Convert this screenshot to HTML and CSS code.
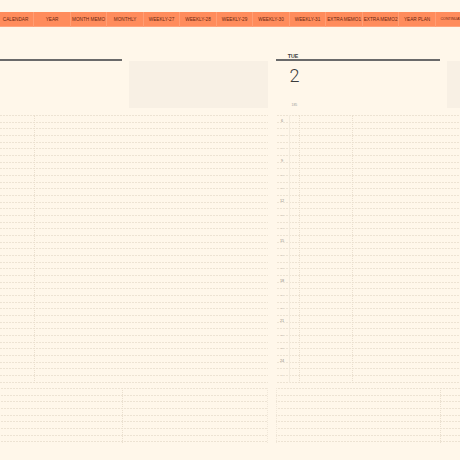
FILE: index.html
```html
<!DOCTYPE html>
<html lang="en">
<head>
    <meta charset="UTF-8">
    <meta name="viewport" content="width=device-width, initial-scale=1.0">
    <title>Weekly-27</title>
    <link rel="stylesheet" href="styles.css">
</head>
<body>
    <nav class="tabs">
        <a class="tab">CALENDAR</a>
        <a class="tab">YEAR</a>
        <a class="tab">MONTH MEMO</a>
        <a class="tab">MONTHLY</a>
        <a class="tab">WEEKLY-27</a>
        <a class="tab">WEEKLY-28</a>
        <a class="tab">WEEKLY-29</a>
        <a class="tab">WEEKLY-30</a>
        <a class="tab">WEEKLY-31</a>
        <a class="tab">EXTRA MEMO1</a>
        <a class="tab">EXTRA MEMO2</a>
        <a class="tab">YEAR PLAN</a>
        <a class="tab tab-small">CONTINUATION</a>
    </nav>

    <main class="week">
        <section class="day">
            <div class="day-head">
                <div class="dow">MON</div>
                <div class="date">
                    <span class="num">1</span>
                    <span class="yday">184</span>
                </div>
            </div>
            <div class="memo-head"></div>
            <div class="hours">
                <div class="times">
                    <span class="major">6</span><span>7</span><span>8</span>
                    <span class="major">9</span><span>10</span><span>11</span>
                    <span class="major">12</span><span>13</span><span>14</span>
                    <span class="major">15</span><span>16</span><span>17</span>
                    <span class="major">18</span><span>19</span><span>20</span>
                    <span class="major">21</span><span>22</span><span>23</span>
                    <span class="major">24</span><span>1</span>
                </div>
                <div class="col col-a"></div>
                <div class="col col-b"></div>
                <div class="col"></div>
            </div>
            <div class="notes">
                <div class="notes-day"></div>
                <div class="notes-memo"></div>
            </div>
        </section>

        <section class="day">
            <div class="day-head">
                <div class="dow">TUE</div>
                <div class="date">
                    <span class="num">2</span>
                    <span class="yday">185</span>
                </div>
            </div>
            <div class="memo-head"></div>
            <div class="hours">
                <div class="times">
                    <span class="major">6</span><span>7</span><span>8</span>
                    <span class="major">9</span><span>10</span><span>11</span>
                    <span class="major">12</span><span>13</span><span>14</span>
                    <span class="major">15</span><span>16</span><span>17</span>
                    <span class="major">18</span><span>19</span><span>20</span>
                    <span class="major">21</span><span>22</span><span>23</span>
                    <span class="major">24</span><span>1</span>
                </div>
                <div class="col col-a"></div>
                <div class="col col-b"></div>
                <div class="col"></div>
            </div>
            <div class="notes">
                <div class="notes-day"></div>
                <div class="notes-memo"></div>
            </div>
        </section>
    </main>
</body>
</html>
```

FILE: styles.css
```css
body {
    margin: 0;
    width: 460px;
    height: 460px;
    overflow: hidden;
    font-family: "Liberation Sans", Arial, sans-serif;
    background-color: #FFF7EA;
}

/* top tab bar */
.tabs {
    display: flex;
    height: 15px;
    margin-top: 12px;
    background-color: #FF8C5C;
    box-shadow: inset 0 -1px 0 #FFA47C;
}

.tab {
    flex: 0 0 36.5px;
    box-sizing: border-box;
    border-right: 1px solid #FF9E74;
    color: #6A2812;
    font-size: 4.7px;
    line-height: 15px;
    text-align: center;
    white-space: nowrap;
}

.tab:first-child {
    margin-left: -2.2px;
}

.tab-small {
    font-size: 3.6px;
    border-right: none;
}

/* week view, scrolled sideways */
.week {
    display: flex;
    gap: 8px;
    margin-top: 20.5px;
    margin-left: -42.7px;
}

.day {
    flex: none;
    display: grid;
    grid-template-columns: 164.7px 139px;
    column-gap: 6.6px;
}

.day-head {
    grid-column: 1;
    grid-row: 1;
}

.dow {
    height: 7.5px;
    padding: 4px 0 0 12.2px;
    border-bottom: 2px solid #6A6A6A;
    color: #3E3E3E;
    font-size: 5.3px;
    font-weight: bold;
    line-height: 8px;
}

.date {
    display: flex;
    flex-direction: column;
    justify-content: space-between;
    height: 47.3px;
    box-sizing: border-box;
    padding: 5.5px 0 1.3px 14px;
}

.num {
    color: #3C3C3C;
    font-family: Roboto, "Liberation Sans", sans-serif;
    font-size: 18px;
    font-weight: 300;
    line-height: 18px;
}

.yday {
    padding-left: 2px;
    color: #9A9A9A;
    font-size: 3.4px;
    line-height: 4px;
}

.memo-head {
    grid-column: 2;
    grid-row: 1;
    align-self: end;
    height: 47.3px;
    background-color: #F8F0E4;
}

/* half-hour grid: solid rules broken into dashes by a striped overlay */
.hours,
.notes {
    grid-column: 1 / -1;
    display: flex;
    background-image:
        linear-gradient(to right, #FFF7EA 34%, transparent 34%),
        repeating-linear-gradient(to bottom, #EDE3D3 0, #EDE3D3 1px, transparent 1px, transparent 6.667px);
    background-size: 3px 100%, auto;
}

.hours {
    height: 267.7px;
    margin-top: 7px;
}

.times {
    display: flex;
    flex-direction: column;
    flex: 0 0 14px;
    box-sizing: border-box;
    border-right: 1px solid #F3EBDD;
}

.times span {
    height: 13.333px;
    color: #BDB7AE;
    font-size: 2.4px;
    line-height: 13.333px;
    text-align: center;
}

.times .major {
    color: #8E8A84;
    font-size: 3.8px;
}

.col {
    flex: 1;
}

.col-a {
    flex: 0 0 9px;
    border-right: 1px dotted #EADFCE;
}

.col-b {
    flex: 0 0 52.4px;
    border-right: 1px dotted #EADFCE;
}

.notes {
    height: 54.3px;
    margin-top: 5.3px;
    box-sizing: border-box;
    border-left: 1px dotted #F0E7D9;
    border-right: 1px dotted #F0E7D9;
}

.notes-day {
    flex: 0 0 164.7px;
    box-sizing: border-box;
    border-right: 1px dotted #EADFCE;
}

.notes-memo {
    flex: 1;
}
```
